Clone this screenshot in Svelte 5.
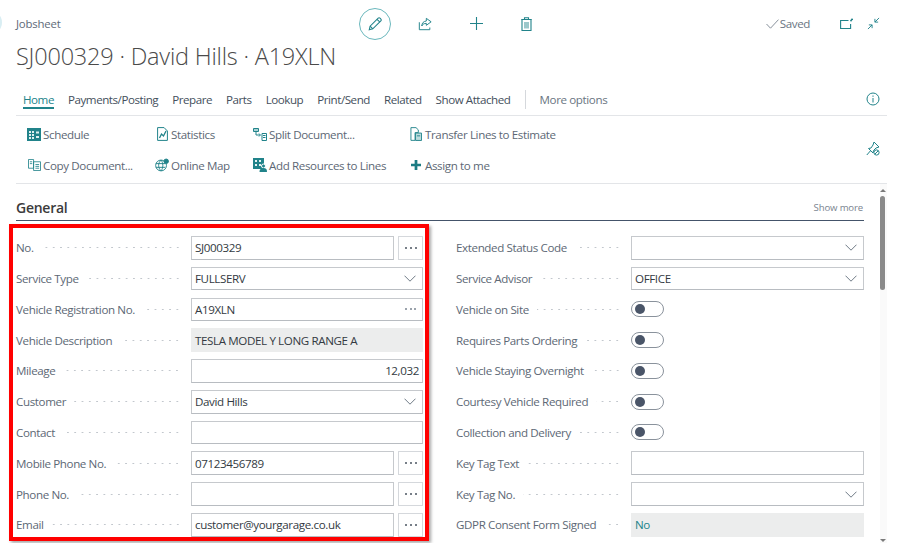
<script>
  const tabs = ['Payments/Posting', 'Prepare', 'Parts', 'Lookup', 'Print/Send', 'Related', 'Show Attached'];

  const left = [
    { label: 'No.', value: 'SJ000329', kind: 'lookup' },
    { label: 'Service Type', value: 'FULLSERV', kind: 'select' },
    { label: 'Vehicle Registration No.', value: 'A19XLN', kind: 'inline' },
    { label: 'Vehicle Description', value: 'TESLA MODEL Y LONG RANGE A', kind: 'readonly' },
    { label: 'Mileage', value: '12,032', kind: 'number' },
    { label: 'Customer', value: 'David Hills', kind: 'select' },
    { label: 'Contact', value: '', kind: 'text' },
    { label: 'Mobile Phone No.', value: '07123456789', kind: 'lookup' },
    { label: 'Phone No.', value: '', kind: 'lookup' },
    { label: 'Email', value: 'customer@yourgarage.co.uk', kind: 'lookup' }
  ];

  const right = [
    { label: 'Extended Status Code', value: '', kind: 'select' },
    { label: 'Service Advisor', value: 'OFFICE', kind: 'select' },
    { label: 'Vehicle on Site', kind: 'toggle' },
    { label: 'Requires Parts Ordering', kind: 'toggle' },
    { label: 'Vehicle Staying Overnight', kind: 'toggle' },
    { label: 'Courtesy Vehicle Required', kind: 'toggle' },
    { label: 'Collection and Delivery', kind: 'toggle' },
    { label: 'Key Tag Text', value: '', kind: 'text' },
    { label: 'Key Tag No.', value: '', kind: 'select' },
    { label: 'GDPR Consent Form Signed', value: 'No', kind: 'readonly link' }
  ];
</script>

{#snippet field(row)}
  <div class="row">
    <div class="label"><span>{row.label}</span><i class="leader"></i></div>
    {#if row.kind === 'toggle'}
      <div class="toggle"><b></b></div>
    {:else if row.kind === 'lookup'}
      <div class="with-btn">
        <div class="box">{row.value}</div>
        <div class="more"><em></em><em></em><em></em></div>
      </div>
    {:else}
      <div class="box {row.kind}">
        <span class="val">{row.value}</span>
        {#if row.kind === 'select'}
          <svg class="chev" width="12" height="7" viewBox="0 0 12 7"><path d="M.5.7L6 6.200 11.500.7" fill="none" stroke="#5f6b78" stroke-width=".9"/></svg>
        {/if}
        {#if row.kind === 'inline'}
          <div class="dots-inline"><em></em><em></em><em></em></div>
        {/if}
      </div>
    {/if}
  </div>
{/snippet}

<div class="page">
  <div class="edge"></div>

  <header class="top">
    <div class="caption">Jobsheet</div>
    <div class="top-actions">
      <div class="edit-ring">
        <svg width="16" height="16" viewBox="0 0 18 18" fill="none" stroke="#21838a" stroke-width="1.2"><path d="M2.500 15.500l1-4L12.600 2.400a1.400 1.400 0 0 1 2 0l1 1a1.400 1.400 0 0 1 0 2L6.500 14.500z"/><path d="M11.300 3.700l3 3M3.500 11.500l3 3"/></svg>
      </div>
      <svg class="share" width="14" height="14" viewBox="0 0 16 16" fill="none" stroke="#21838a" stroke-width="1.100"><path d="M1.500 6v8.500h12V12"/><path d="M9.500 1.500l5.500 4-5.500 4V7.300c-2.500 0-4 .8-5.200 3 .2-3.500 2-5.400 5.200-5.700z"/></svg>
      <svg class="plus" width="13" height="13" viewBox="0 0 13 13" stroke="#21838a" stroke-width="1.100"><path d="M6.500 0v13M0 6.500h13"/></svg>
      <svg class="trash" width="11" height="14" viewBox="0 0 11 14" fill="none" stroke="#21838a" stroke-width="1.100"><path d="M.5 2.500h10M3.500 2.500V.8h4v1.700"/><path d="M1 2.500h9v11H1z"/><path d="M3 5v6.500h5V5z" fill="#21838a" opacity=".45" stroke="none"/></svg>
    </div>
    <div class="top-right">
      <svg width="13" height="10" viewBox="0 0 13 10" fill="none" stroke="#7a8490" stroke-width=".9"><path d="M.5 5l4 4.200L12.500.6"/></svg>
      <span class="saved">Saved</span>
      <svg class="popout" width="13" height="11" viewBox="0 0 13 11" fill="none" stroke="#21838a" stroke-width="1.100"><path d="M8.500 2.500H.6v8h10V6"/><path d="M10.500 3.200l2-2.500" stroke-width="1.600"/></svg>
      <svg class="collapse" width="13" height="13" viewBox="0 0 14 14" fill="none" stroke="#21838a" stroke-width="1"><path d="M13 1L8.500 5.500M8.500 2v3.500H12M1 13l4.500-4.500M2 8.500h3.500V12"/></svg>
    </div>
  </header>

  <h1>SJ000329 · David Hills · A19XLN</h1>

  <nav class="tabs">
    <span class="tab active">Home</span>
    {#each tabs as t}
      <span class="tab">{t}</span>
    {/each}
    <span class="sep"></span>
    <span class="tab muted">More options</span>
    <svg class="info" width="14" height="14" viewBox="0 0 14 14" fill="none" stroke="#21838a" stroke-width="1"><circle cx="7" cy="7" r="6"/><path d="M7 6v4.500M7 3.500v1.300"/></svg>
  </nav>

  <section class="ribbon">
    <div class="ribbon-grid">
      <div class="act">
        <svg width="14" height="13" viewBox="0 0 14 13"><path d="M0 0h14v13H0z" fill="#21838a"/><path d="M2 3h2v2H2zM5 3h2v2H5zM2 6h2v2H2zM5 6h2v2H5zM2 9h2v2H2zM5 9h2v2H5zM9 3.500h3v2H9zM9 8h3v2H9z" fill="#dff0f0"/></svg>
        <span>Schedule</span>
      </div>
      <div class="act">
        <svg width="11" height="14" viewBox="0 0 11 14" fill="none" stroke="#21838a"><path d="M.6.600h6.500L10.400 4v9.400H.6z"/><path d="M2.500 11l2-4 2 2 2.500-5" stroke-width="1.300"/></svg>
        <span>Statistics</span>
      </div>
      <div class="act">
        <svg width="14" height="13" viewBox="0 0 14 13" fill="none" stroke="#21838a"><path d="M.5.500h5v3h-5z" fill="#a9d3d4"/><path d="M3 4v3h4M9 5.500h4.500v7H9z"/><path d="M10 7.500h2.500M10 9.500h2.500"/><path d="M6 5.500l1.500 1.500L6 8.500"/></svg>
        <span>Split Document...</span>
      </div>
      <div class="act">
        <svg width="12" height="14" viewBox="0 0 13 15" fill="none" stroke="#21838a"><path d="M1 .6h5.500L9 3v3H5.500v8.400H1z"/><path d="M6 6.500h6.500v8H6z" fill="#bcdcdd"/><path d="M7.500 9.500h3.500"/></svg>
        <span>Transfer Lines to Estimate</span>
      </div>
      <div class="act">
        <svg width="13" height="12" viewBox="0 0 14 13" fill="none" stroke="#21838a" stroke-width=".9"><path d="M.5.500H6V10H.5zM6 3h7.500v9.500H6z"/><path d="M2 3h2.500M2 5h2.500M8 6h4M8 8h4M8 10h4"/></svg>
        <span>Copy Document...</span>
      </div>
      <div class="act">
        <svg width="14" height="14" viewBox="0 0 15 14" fill="none" stroke="#21838a"><circle cx="6.500" cy="7.500" r="5.800"/><path d="M6.500 1.700c-3.500 3.500-3.500 8 0 11.600M6.500 1.700c2.500 3 2.500 8.500 0 11.600M1 5.500h10M1 9.500h10"/><circle cx="12" cy="3" r="2.400" fill="#21838a"/></svg>
        <span>Online Map</span>
      </div>
      <div class="act">
        <svg width="14" height="14" viewBox="0 0 14 14"><path d="M0 0h11v11H0z" fill="#21838a"/><path d="M2 2h2v2H2zM6 2h2v2H6zM2 6h2v2H2zM6 6h2v2H6z" fill="#e5f2f2"/><circle cx="10.500" cy="8" r="2" fill="#21838a" stroke="#fff"/><path d="M6.500 14c0-3 1.500-4 4-4s3.500 1 3.500 4z" fill="#21838a"/></svg>
        <span>Add Resources to Lines</span>
      </div>
      <div class="act">
        <svg width="10" height="10" viewBox="0 0 11 11"><path d="M4 0h3v4h4v3H7v4H4V7H0V4h4z" fill="#1b7c83"/></svg>
        <span>Assign to me</span>
      </div>
    </div>
    <svg class="pin" width="14" height="15" viewBox="0 0 14 15" fill="none" stroke="#21838a"><path d="M8 1l5 5-3 1-2.500 2.500L7 12 2.500 7.500 5 7l2-3z"/><path d="M.8 14l3.500-4"/><circle cx="10.500" cy="11.500" r="2.600" fill="#fff"/><path d="M9 13l3-3"/></svg>
  </section>

  <div class="body">
    <main class="content">
      <div class="section-head">
        <h2>General</h2>
        <span class="show-more">Show more</span>
      </div>
      <div class="columns">
        <div class="col">
          {#each left as row}{@render field(row)}{/each}
        </div>
        <div class="col">
          {#each right as row}{@render field(row)}{/each}
        </div>
      </div>
    </main>
    <aside class="scroll">
      <span class="arrow up"></span>
      <span class="thumb"></span>
      <span class="arrow down"></span>
    </aside>
  </div>

  <div class="highlight"></div>
</div>

<style>
  :global(body) {
    margin: 0;
    background: #fff;
  }
  .page {
    position: relative;
    width: 900px;
    height: 543px;
    overflow: hidden;
    box-sizing: border-box;
    padding: 0 13px 0 16px;
    font-family: "Open Sans", "Liberation Sans", sans-serif;
    font-size: 11.6px;
    letter-spacing: -0.38px;
    color: #5d6875;
    background: #fff;
  }
  .edge {
    position: absolute;
    left: -6px;
    top: 15px;
    width: 8px;
    height: 15px;
    border-radius: 50%;
    background: #d9eef3;
  }
  .top {
    display: grid;
    grid-template-columns: 343px 1fr auto;
    align-items: center;
    height: 46px;
    padding-top: 1px;
    box-sizing: border-box;
  }
  .caption {
    font-size: 11.4px;
    letter-spacing: -0.2px;
    color: #5e6a78;
  }
  .top-actions {
    display: flex;
    align-items: center;
  }
  .edit-ring {
    width: 30px;
    height: 30px;
    border: 1px solid #6bb8bd;
    border-radius: 50%;
    display: flex;
    align-items: center;
    justify-content: center;
  }
  .share { margin-left: 27px; }
  .plus { margin-left: 38px; }
  .trash { margin-left: 38px; }
  .top-right {
    display: flex;
    align-items: center;
    padding-right: 7px;
  }
  .saved {
    margin-left: 1px;
    color: #6a7582;
  }
  .popout { margin-left: 30px; }
  .collapse { margin-left: 14px; }
  h1 {
    margin: -2px 0 0;
    font-size: 23.5px;
    font-weight: 300;
    letter-spacing: -0.2px;
    line-height: 24px;
    color: #4a4a4a;
    height: 32px;
  }
  .tabs {
    display: flex;
    align-items: center;
    height: 31px;
    padding: 8px 7px 0;
    gap: 14px;
    border-bottom: 1px solid #e3e5e8;
    color: #444f5c;
    letter-spacing: -0.45px;
  }
  .tab {
    line-height: 16px;
    position: relative;
    white-space: nowrap;
  }
  .tab.active {
    color: #21838a;
  }
  .tab.active::after {
    content: "";
    position: absolute;
    left: 0;
    right: 0;
    bottom: -1px;
    height: 2px;
    background: #21838a;
  }
  .tab.muted { color: #6a7582; letter-spacing: -0.38px; }
  .sep {
    width: 1px;
    height: 19px;
    background: #d5d8dc;
  }
  .info { margin-left: auto; margin-right: 0; margin-top: -2px; }
  .ribbon {
    display: flex;
    align-items: center;
    height: 67px;
    padding: 0 7px 0 11px;
    border-bottom: 1px solid #e3e5e8;
    justify-content: space-between;
  }
  .ribbon-grid {
    display: grid;
    grid-template-columns: 128px 98px 156px auto;
    row-gap: 13px;
  }
  .act {
    display: grid;
    grid-template-columns: 14px 1fr;
    column-gap: 2px;
    align-items: center;
    height: 18px;
    white-space: nowrap;
  }
  .act svg { justify-self: center; }
  .act span { justify-self: start; }
  .pin { margin-top: -2px; }
  .body {
    display: flex;
  }
  .content {
    width: 848px;
    flex: none;
  }
  .section-head {
    display: flex;
    justify-content: space-between;
    align-items: flex-end;
    height: 37px;
    padding-bottom: 3px;
    box-sizing: border-box;
    border-bottom: 1px solid #44546a;
  }
  h2 {
    margin: 0;
    font-size: 14px;
    font-weight: 600;
    line-height: 18px;
    letter-spacing: -0.25px;
    color: #3b3b3b;
  }
  .show-more {
    font-size: 9.6px;
    letter-spacing: -0.15px;
    color: #7a8490;
    line-height: 18px;
    padding-right: 1px;
  }
  .columns {
    display: grid;
    grid-template-columns: 407px 408px;
    column-gap: 33px;
    padding-top: 15px;
  }
  .col {
    display: flex;
    flex-direction: column;
    gap: 7.200px;
  }
  .row {
    display: grid;
    grid-template-columns: 175px 1fr;
    height: 23.6px;
    align-items: center;
  }
  .label {
    display: flex;
    align-items: center;
    white-space: nowrap;
    padding-right: 10px;
    min-width: 0;
  }
  .leader {
    flex: 1;
    margin-left: 8px;
    height: 3px;
    background-image: radial-gradient(circle, #c2c7cd .6px, transparent 1px);
    background-size: 7.300px 3px;
    background-position: right center;
    background-repeat: repeat-x;
  }
  .box {
    box-sizing: border-box;
    height: 23.6px;
    border: 1px solid #c6c9cd;
    border-bottom-color: #b8bcc1;
    padding: 0 3px;
    display: flex;
    align-items: center;
    justify-content: space-between;
    color: #333a42;
    white-space: nowrap;
    min-width: 0;
  }
  .box.number { justify-content: flex-end; }
  .box.readonly {
    background: #eceded;
    border-color: #eceded;
  }
  .box.link .val { color: #21838a; }
  .chev { margin-right: 3px; }
  .with-btn {
    display: grid;
    grid-template-columns: 203px 25px;
    column-gap: 4px;
  }
  .more {
    height: 23.6px;
    box-sizing: border-box;
    border: 1px solid #d5d8dc;
    display: flex;
    align-items: center;
    justify-content: center;
    gap: 3px;
  }
  .more em, .dots-inline em {
    display: block;
    width: 2px;
    height: 2px;
    border-radius: 50%;
    background: #4a5560;
  }
  .dots-inline {
    display: flex;
    gap: 2.500px;
    margin-right: 3px;
  }
  .dots-inline em { background: #7a8490; }
  .toggle {
    width: 33px;
    height: 16px;
    box-sizing: border-box;
    border: 1px solid #8a929c;
    border-radius: 8px;
    padding: 2px 3px;
  }
  .toggle b {
    display: block;
    width: 10px;
    height: 10px;
    border-radius: 50%;
    background: #4a5568;
  }
  .scroll {
    position: relative;
    width: 7px;
    height: 359px;
    margin-top: 0;
    background: #fafafa;
    margin-left: 16px;
  }
  .thumb {
    position: absolute;
    left: 0;
    top: 12px;
    width: 5px;
    height: 94px;
    border-radius: 3px;
    background: #8a8a8a;
  }
  .arrow {
    position: absolute;
    left: 0;
    width: 0;
    height: 0;
    border-left: 3px solid transparent;
    border-right: 3px solid transparent;
  }
  .arrow.up { top: 5px; border-bottom: 3px solid #7a7a7a; }
  .arrow.down { top: 355px; border-top: 3px solid #7a7a7a; }
  .highlight {
    position: absolute;
    left: 9px;
    top: 224px;
    width: 420px;
    height: 317px;
    box-sizing: border-box;
    border: 4px solid #f00;
    box-shadow: 2px 2px 3px rgba(0, 0, 0, .35);
    pointer-events: none;
  }
</style>
